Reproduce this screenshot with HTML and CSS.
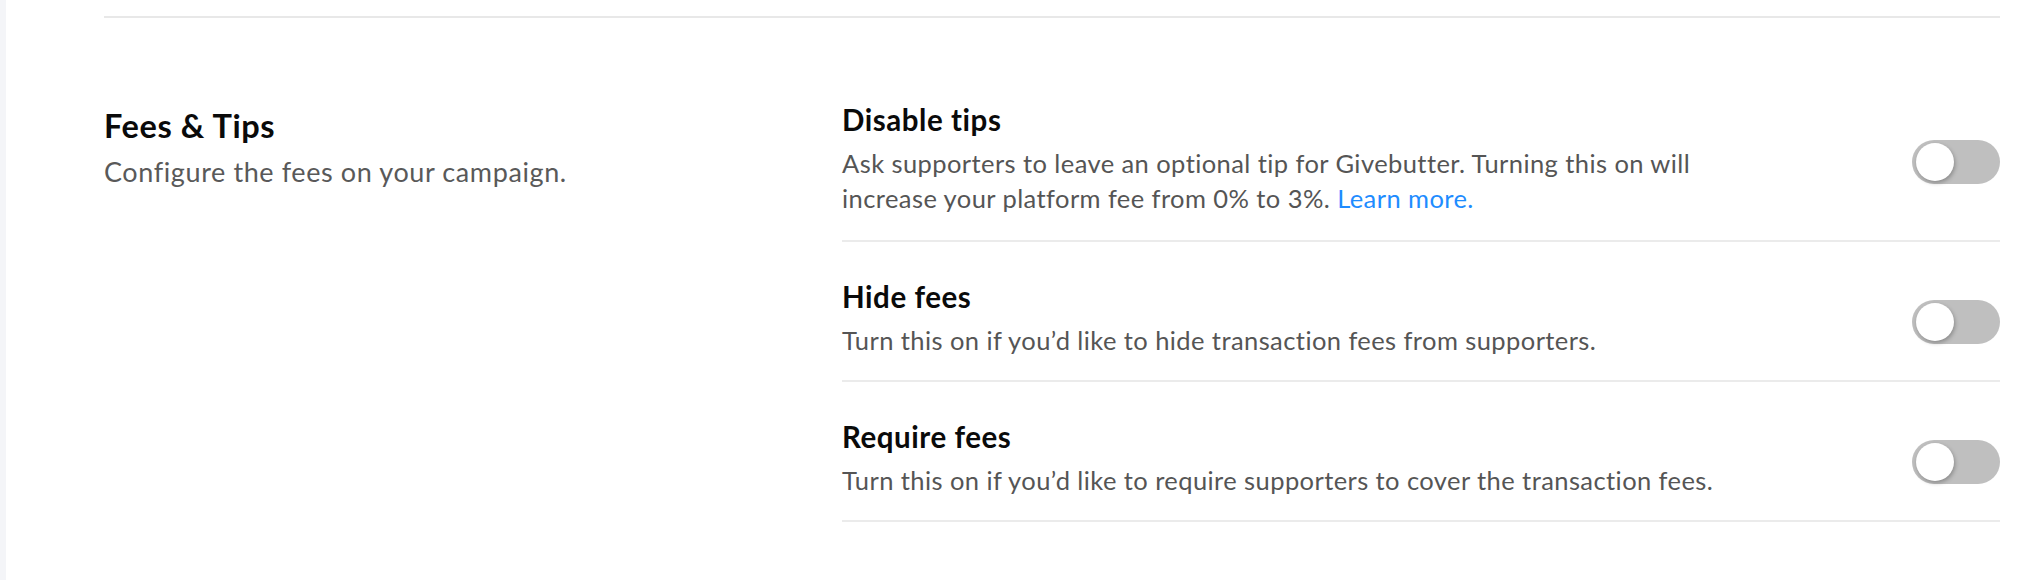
FILE: index.html
```html
<!DOCTYPE html>
<html>
<head>
<meta charset="utf-8">
<link rel="stylesheet" href="styles.css">
</head>
<body>
<div class="page">
  <div class="strip"></div>
  <main class="main">
    <div class="divider"></div>
    <section class="section">
      <div class="section-head">
        <h2 class="section-title">Fees &amp; Tips</h2>
        <p class="section-sub">Configure the fees on your campaign.</p>
      </div>
      <div class="settings">
        <div class="row row-first">
          <div class="row-text">
            <h3 class="row-title">Disable tips</h3>
            <p class="row-desc">Ask supporters to leave an optional tip for Givebutter. Turning this on will increase your platform fee from 0% to 3%. <a class="link" href="#">Learn more.</a></p>
          </div>
          <div class="toggle"><span class="knob"></span></div>
        </div>
        <div class="row">
          <div class="row-text">
            <h3 class="row-title">Hide fees</h3>
            <p class="row-desc">Turn this on if you’d like to hide transaction fees from supporters.</p>
          </div>
          <div class="toggle"><span class="knob"></span></div>
        </div>
        <div class="row">
          <div class="row-text">
            <h3 class="row-title">Require fees</h3>
            <p class="row-desc">Turn this on if you’d like to require supporters to cover the transaction fees.</p>
          </div>
          <div class="toggle"><span class="knob"></span></div>
        </div>
      </div>
    </section>
  </main>
</div>
</body>
</html>
```

FILE: styles.css
```css
* { box-sizing: border-box; }
html, body { margin: 0; padding: 0; background: #ffffff; }
body { font-family: Lato, "Noto Sans", sans-serif; color: #0a0a0a; }

.page { display: flex; min-height: 580px; }
.strip { width: 6px; background: #f4f5f8; flex: none; }
.main { flex: 1; padding: 0 38px 0 98px; }

.divider { margin-top: 16px; height: 2px; background: #e8e8e8; }

.section { display: grid; grid-template-columns: 738px 1fr; margin-top: 47px; }

.section-head { padding-top: 42px; }
.section-title { margin: 0; font-size: 32.5px; line-height: 38px; font-weight: 700; letter-spacing: 0.6px; color: #0a0a0a; }
.section-sub { margin: 9px 0 0; font-size: 27px; line-height: 35px; letter-spacing: 0.6px; color: #595959; }

.settings { display: flex; flex-direction: column; }
.row { display: flex; align-items: center; padding: 37px 0 22px; border-bottom: 2px solid #ebebeb; }
.row-first { padding-bottom: 24px; }
.row-text { flex: 1; }
.row-title { margin: 0; font-size: 29.5px; line-height: 36px; font-weight: 700; letter-spacing: 0.55px; color: #0a0a0a; }
.row-desc { margin: 8px 0 0; max-width: 900px; font-size: 25.5px; line-height: 35px; letter-spacing: 0.42px; color: #555555; }
.link { color: #1e8cff; text-decoration: none; }

.toggle { flex: none; width: 88px; height: 44px; border-radius: 22px; background: #bfbfbf; padding: 3px 4px; margin-top: 6px; }
.knob { display: block; width: 38px; height: 38px; border-radius: 50%; background: #ffffff; box-shadow: 1px 2px 4px rgba(0, 0, 0, 0.28); }
```
